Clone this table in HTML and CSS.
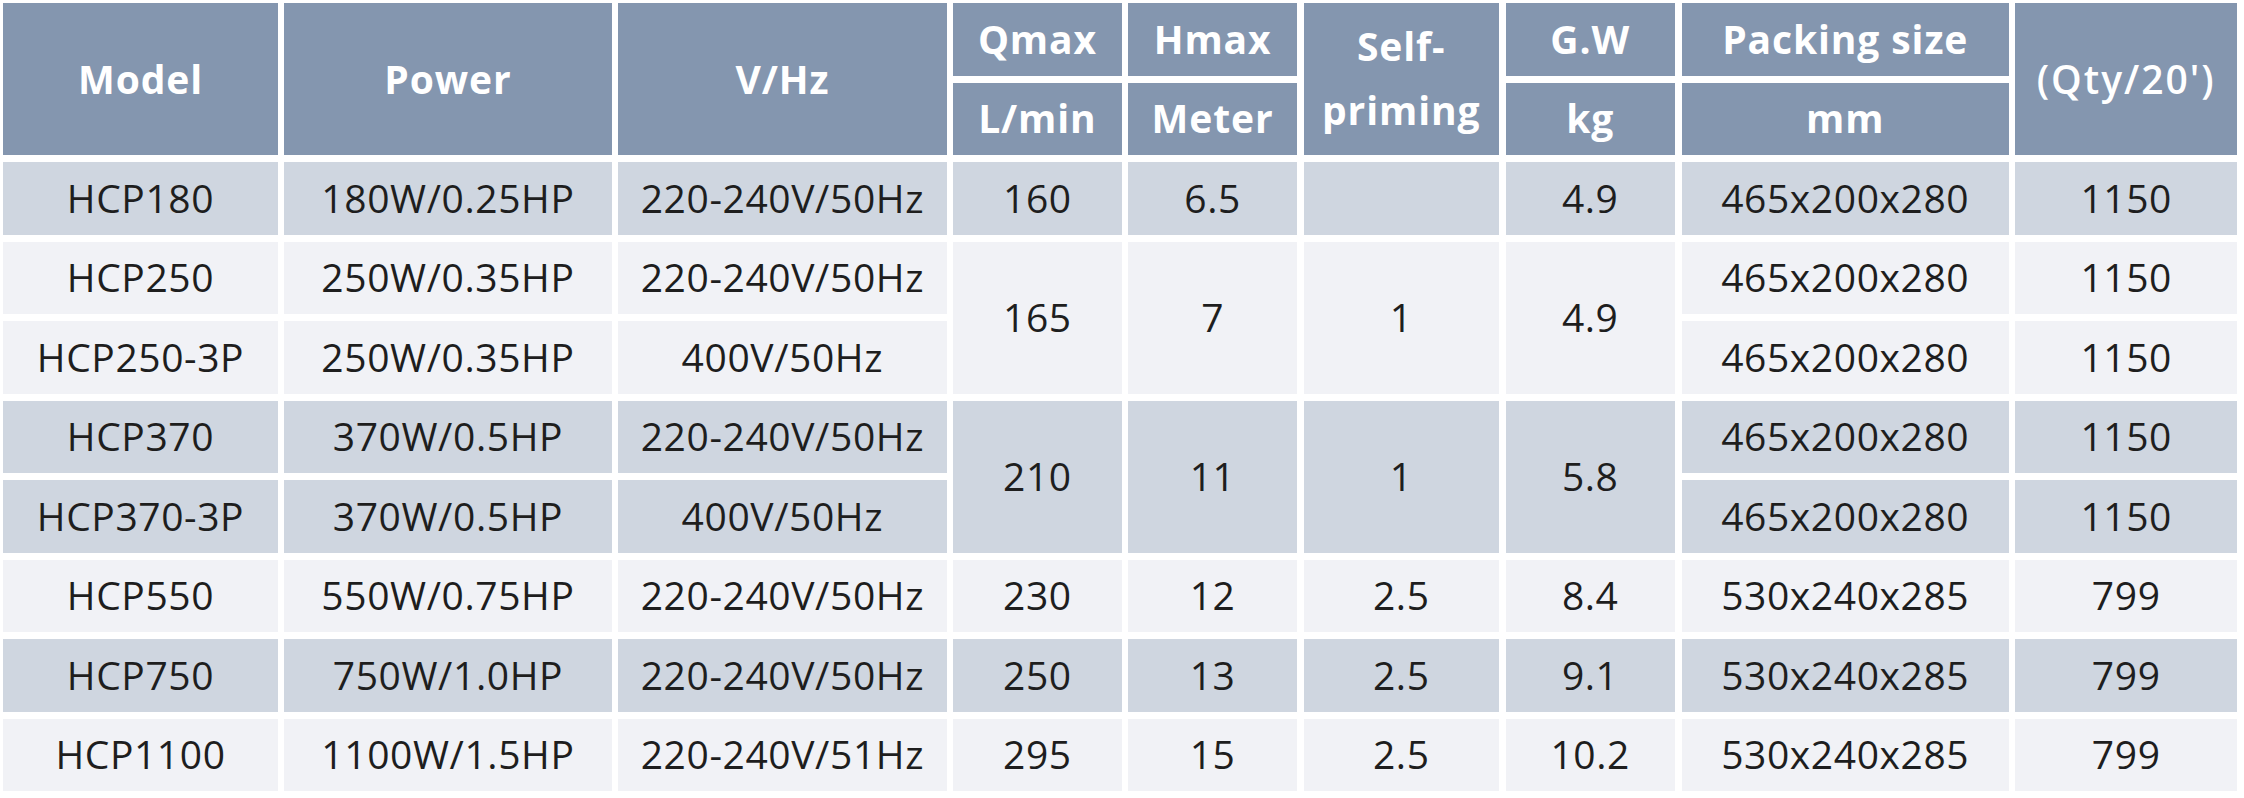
FILE: index.html
```html
<!DOCTYPE html>
<html lang="en">
<head>
<meta charset="utf-8">
<title>HCP pump specifications</title>
<link rel="stylesheet" href="styles.css">
</head>
<body>
<div class="spec">
  <div class="hd tall">Model</div>
  <div class="hd tall">Power</div>
  <div class="hd tall">V/Hz</div>
  <div class="hd">Qmax</div>
  <div class="hd">Hmax</div>
  <div class="hd tall two">Self-<br>priming</div>
  <div class="hd">G.W</div>
  <div class="hd">Packing size</div>
  <div class="hd tall qty">(Qty/20')</div>
  <div class="hd">L/min</div>
  <div class="hd">Meter</div>
  <div class="hd">kg</div>
  <div class="hd">mm</div>

  <div class="cd dk">HCP180</div>
  <div class="cd dk">180W/0.25HP</div>
  <div class="cd dk">220-240V/50Hz</div>
  <div class="cd dk">160</div>
  <div class="cd dk">6.5</div>
  <div class="cd dk"></div>
  <div class="cd dk">4.9</div>
  <div class="cd dk">465x200x280</div>
  <div class="cd dk">1150</div>

  <div class="cd lt">HCP250</div>
  <div class="cd lt">250W/0.35HP</div>
  <div class="cd lt">220-240V/50Hz</div>
  <div class="cd lt tall">165</div>
  <div class="cd lt tall">7</div>
  <div class="cd lt tall">1</div>
  <div class="cd lt tall">4.9</div>
  <div class="cd lt">465x200x280</div>
  <div class="cd lt">1150</div>
  <div class="cd lt">HCP250-3P</div>
  <div class="cd lt">250W/0.35HP</div>
  <div class="cd lt">400V/50Hz</div>
  <div class="cd lt">465x200x280</div>
  <div class="cd lt">1150</div>

  <div class="cd dk">HCP370</div>
  <div class="cd dk">370W/0.5HP</div>
  <div class="cd dk">220-240V/50Hz</div>
  <div class="cd dk tall">210</div>
  <div class="cd dk tall">11</div>
  <div class="cd dk tall">1</div>
  <div class="cd dk tall">5.8</div>
  <div class="cd dk">465x200x280</div>
  <div class="cd dk">1150</div>
  <div class="cd dk">HCP370-3P</div>
  <div class="cd dk">370W/0.5HP</div>
  <div class="cd dk">400V/50Hz</div>
  <div class="cd dk">465x200x280</div>
  <div class="cd dk">1150</div>

  <div class="cd lt">HCP550</div>
  <div class="cd lt">550W/0.75HP</div>
  <div class="cd lt">220-240V/50Hz</div>
  <div class="cd lt">230</div>
  <div class="cd lt">12</div>
  <div class="cd lt">2.5</div>
  <div class="cd lt">8.4</div>
  <div class="cd lt">530x240x285</div>
  <div class="cd lt">799</div>

  <div class="cd dk">HCP750</div>
  <div class="cd dk">750W/1.0HP</div>
  <div class="cd dk">220-240V/50Hz</div>
  <div class="cd dk">250</div>
  <div class="cd dk">13</div>
  <div class="cd dk">2.5</div>
  <div class="cd dk">9.1</div>
  <div class="cd dk">530x240x285</div>
  <div class="cd dk">799</div>

  <div class="cd lt">HCP1100</div>
  <div class="cd lt">1100W/1.5HP</div>
  <div class="cd lt">220-240V/51Hz</div>
  <div class="cd lt">295</div>
  <div class="cd lt">15</div>
  <div class="cd lt">2.5</div>
  <div class="cd lt">10.2</div>
  <div class="cd lt">530x240x285</div>
  <div class="cd lt">799</div>
</div>
</body>
</html>
```
FILE: styles.css
```css
html, body {
  margin: 0;
  padding: 0;
  background: #ffffff;
}

.spec {
  display: grid;
  grid-template-columns: 274.4px 327.3px 328.4px 168.5px 168.7px 195.4px 169.4px 327.4px 221.4px;
  grid-auto-rows: 72.5px;
  column-gap: 6.6px;
  row-gap: 7px;
  padding: 3px 0 0 3.3px;
  font-family: "Open Sans", "Noto Sans", "DejaVu Sans", sans-serif;
  font-size: 39px;
}

.hd,
.cd {
  display: flex;
  align-items: center;
  justify-content: center;
  text-align: center;
  white-space: nowrap;
  padding-bottom: 2px;
  box-sizing: border-box;
}

.hd {
  background: #8496af;
  color: #ffffff;
  font-weight: 700;
  letter-spacing: 0.9px;
}

.cd {
  color: #1e1e1e;
  font-weight: 400;
  letter-spacing: 0.6px;
}

.dk {
  background: #cfd6e0;
}

.lt {
  background: #f1f2f6;
}

.tall {
  grid-row: span 2;
}

.two {
  line-height: 64px;
}

.qty {
  font-weight: 600;
  letter-spacing: 2px;
}
```
